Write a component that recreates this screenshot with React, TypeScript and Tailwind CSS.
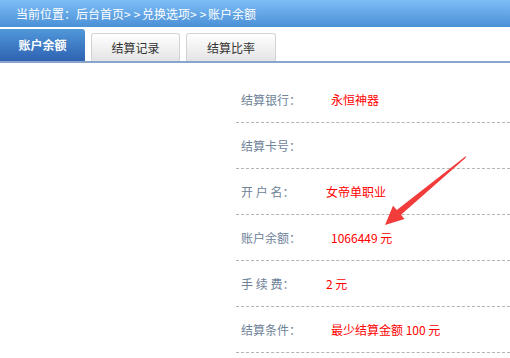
import React from "react";

const rows = [
  { label: "结算银行：", value: "永恒神器", shift: true },
  { label: "结算卡号：", value: "", shift: true },
  { label: "开 户 名：", value: "女帝单职业", shift: false },
  { label: "账户余额：", value: "1066449 元", shift: true },
  { label: "手 续 费：", value: "2 元", shift: false },
  { label: "结算条件：", value: "最少结算金额 100 元", shift: true },
];

function Arrow() {
  return (
    <svg className="absolute left-0 top-0 pointer-events-none" width="510" height="358" viewBox="0 0 510 358">
      <polygon
        points="466,156 465.5,158 401,214.8 404.5,219 385,225 393,205.8 396.8,210"
        fill="#f23b3b"
      />
    </svg>
  );
}

function Sep() {
  return <span className="inline-block w-[18px] tracking-[3px] text-center">&gt;&gt;</span>;
}

export default function App() {
  return (
    <div
      className="relative w-[510px] h-[358px] bg-white overflow-hidden"
      style={{ fontFamily: '"Noto Sans CJK SC", "Noto Sans", sans-serif' }}
    >
      {/* Breadcrumb */}
      <div className="h-[27px] bg-gradient-to-b from-[#7dbef7] to-[#4a90d6] flex items-center pl-[16px] text-[12px] text-white">
        当前位置：后台首页<Sep />兑换选项<Sep />账户余额
      </div>

      {/* Tabs */}
      <div className="mt-[2px] h-[32px] flex items-end">
        <div className="w-[85px] h-[32px] rounded-tr-[3px] bg-gradient-to-b from-[#5198da] to-[#2f62b2] flex items-center justify-center text-[12px] font-bold text-white">
          账户余额
        </div>
        <div className="ml-[6px] w-[89px] h-[28px] rounded-t-[3px] border border-b-0 border-[#d3d3d3] bg-gradient-to-b from-white to-[#e4e4e4] flex items-center justify-center text-[12px] text-[#333]">
          结算记录
        </div>
        <div className="ml-[6px] w-[90px] h-[28px] rounded-t-[3px] border border-b-0 border-[#d3d3d3] bg-gradient-to-b from-white to-[#e4e4e4] flex items-center justify-center text-[12px] text-[#333]">
          结算比率
        </div>
      </div>
      <div className="h-[2px] bg-[#8aa5cd]" />

      {/* Detail rows */}
      <div className="ml-[236px] pt-[14px]">
        {rows.map((r) => (
          <div
            key={r.label}
            className="h-[46px] flex items-center border-b border-dashed border-[#b4b4b4] pl-[5px] text-[12px]"
          >
            <span className="w-[85px] text-[#6e8298] whitespace-pre">{r.label}</span>
            <span className={`text-[#ff0000] ${r.shift ? "ml-[5px]" : ""}`}>{r.value}</span>
          </div>
        ))}
      </div>

      <Arrow />
    </div>
  );
}
